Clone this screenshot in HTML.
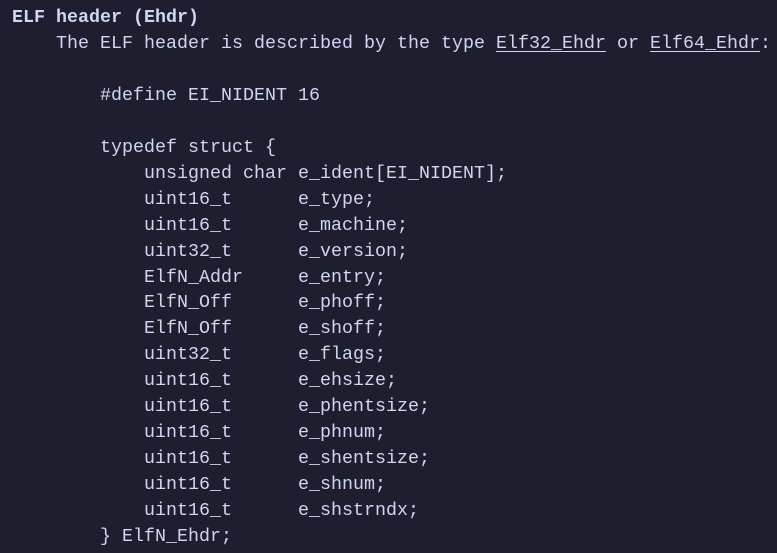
<!DOCTYPE html>
<html><head><style>
html,body{margin:0;padding:0;background:#1e1e2e;}
body{width:777px;height:553px;overflow:hidden;}
pre{margin:0;padding:5px 0 0 12px;font-family:"Liberation Mono",monospace;font-size:18.33px;line-height:25.95px;color:#cdd6f4;}
b{font-weight:bold;}
u{text-decoration:underline;text-underline-offset:3px;}
</style></head><body>
<pre><b>ELF header (Ehdr)</b>
    The ELF header is described by the type <u>Elf32_Ehdr</u> or <u>Elf64_Ehdr</u>:

        #define EI_NIDENT 16

        typedef struct {
            unsigned char e_ident[EI_NIDENT];
            uint16_t      e_type;
            uint16_t      e_machine;
            uint32_t      e_version;
            ElfN_Addr     e_entry;
            ElfN_Off      e_phoff;
            ElfN_Off      e_shoff;
            uint32_t      e_flags;
            uint16_t      e_ehsize;
            uint16_t      e_phentsize;
            uint16_t      e_phnum;
            uint16_t      e_shentsize;
            uint16_t      e_shnum;
            uint16_t      e_shstrndx;
        } ElfN_Ehdr;</pre>
</body></html>
